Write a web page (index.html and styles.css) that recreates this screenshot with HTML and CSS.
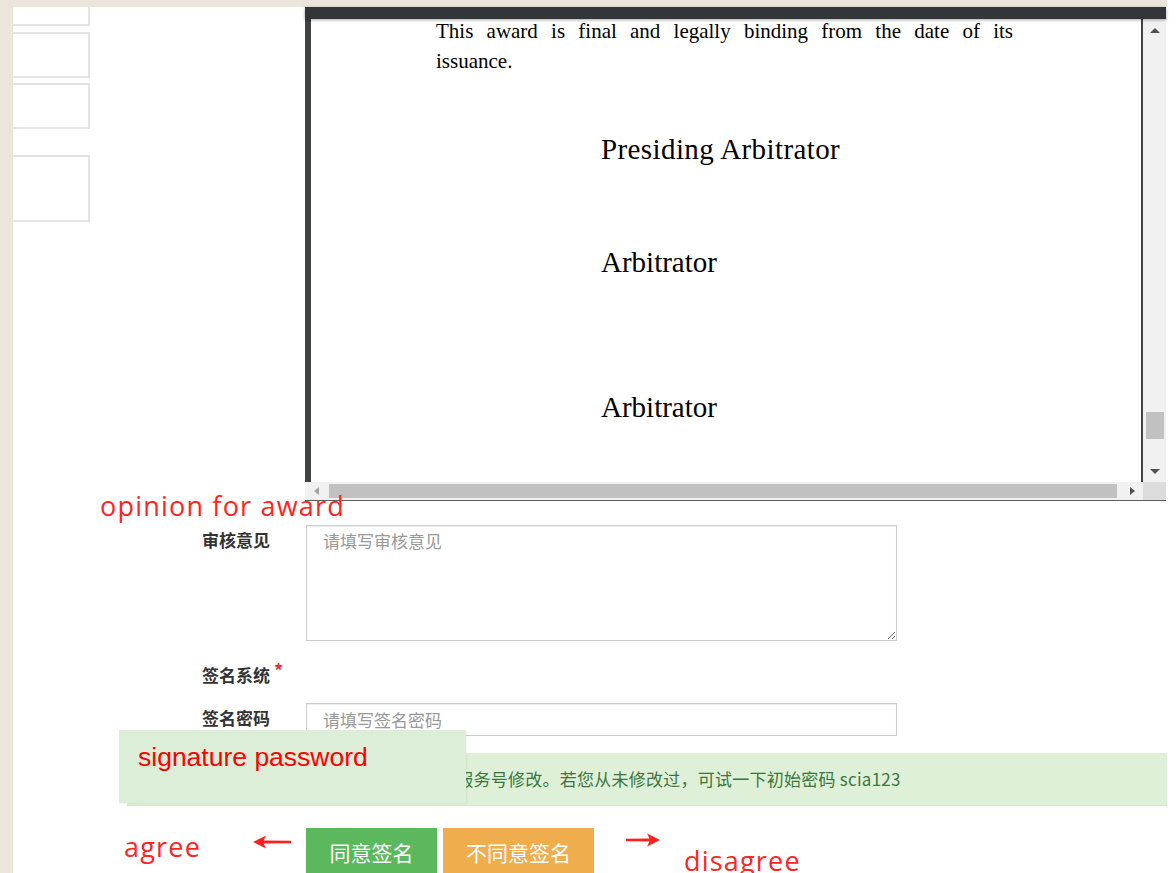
FILE: index.html
```html
<!DOCTYPE html>
<html lang="zh-CN">
<head>
<meta charset="utf-8">
<title>裁决书审核签名</title>
<link rel="stylesheet" href="styles.css">
</head>
<body>
<div class="shell">
  <div class="top">
    <aside class="side">
      <div class="tile tile-a"></div>
      <div class="tile tile-b"></div>
      <div class="tile tile-c"></div>
      <div class="tile tile-d"></div>
    </aside>
    <section class="viewer">
      <div class="viewer-bar"></div>
      <div class="viewer-main">
        <div class="gutter"></div>
        <div class="page">
          <p class="para">This award is final and legally binding from the date of its<br>issuance.</p>
          <p class="sign sign-1">Presiding Arbitrator</p>
          <p class="sign sign-2">Arbitrator</p>
          <p class="sign sign-3">Arbitrator</p>
        </div>
        <div class="gutter gutter-r"></div>
        <div class="vscroll">
          <div class="sb-btn"><svg width="10" height="5" viewBox="0 0 10 5"><path d="M0 5 L5 0 L10 5 Z" fill="#505050"/></svg></div>
          <div class="vtrack"><div class="vthumb"></div></div>
          <div class="sb-btn"><svg width="10" height="5" viewBox="0 0 10 5"><path d="M0 0 L10 0 L5 5 Z" fill="#505050"/></svg></div>
        </div>
      </div>
      <div class="hscroll-row">
        <div class="hscroll">
          <div class="hs-btn"><svg width="5" height="8" viewBox="0 0 5 8"><path d="M5 0 L5 8 L0 4 Z" fill="#a3a3a3"/></svg></div>
          <div class="htrack"><div class="hthumb"></div></div>
          <div class="hs-btn"><svg width="5" height="8" viewBox="0 0 5 8"><path d="M0 0 L5 4 L0 8 Z" fill="#505050"/></svg></div>
        </div>
        <div class="corner"></div>
      </div>
    </section>
  </div>

  <form class="form">
    <div class="row row-opinion">
      <label class="lbl" for="opinion">审核意见</label>
      <textarea id="opinion" class="field area" placeholder="请填写审核意见"></textarea>
    </div>
    <div class="row row-system">
      <span class="lbl">签名系统<sup class="req">*</sup></span>
    </div>
    <div class="row row-pass">
      <label class="lbl" for="signpass">签名密码</label>
      <input id="signpass" class="field inp" type="password" placeholder="请填写签名密码">
    </div>
    <div class="alert">签名密码可通过微信服务号修改。若您从未修改过，可试一下初始密码 scia123</div>
    <div class="actions">
      <button type="button" class="btn btn-ok">同意签名</button>
      <button type="button" class="btn btn-no">不同意签名</button>
    </div>
  </form>
</div>

<div class="note note-opinion">opinion for award</div>
<div class="note-box"><span>signature password</span></div>
<div class="note note-agree">agree</div>
<svg class="arrow arrow-left" width="38" height="14" viewBox="0 0 38 14"><path d="M0 7 L13 0.5 L10.5 5.5 L38 5.7 L38 8.3 L10.5 8.5 L13 13.5 Z" fill="#ff1f1f"/></svg>
<svg class="arrow arrow-right" width="34" height="14" viewBox="0 0 34 14"><path d="M34 7 L21 0.5 L23.5 5.5 L0 5.7 L0 8.3 L23.5 8.5 L21 13.5 Z" fill="#ff1f1f"/></svg>
<div class="note note-disagree">disagree</div>
</body>
</html>
```
FILE: styles.css
```css
* { box-sizing: border-box; }

html, body { margin: 0; padding: 0; }

body {
  position: relative;
  width: 1176px;
  height: 873px;
  overflow: hidden;
  background: #fff;
  color: #333;
  font-family: "Noto Sans CJK SC", "Liberation Sans", sans-serif;
}

/* page frame: beige strips along the top and left edge */
.shell {
  width: 1167px;
  height: 873px;
  border-top: 7px solid #ebe5dc;
  border-left: 13px solid #ebe5dc;
}

.top {
  display: flex;
  height: 494px;
}

/* left column of empty panels */
.side { width: 292px; }

.tile {
  width: 77px;
  border: 2px solid #e4e4e4;
  border-left: 0;
}
.tile-a { height: 19px; border-top: 0; }
.tile-b { height: 46px; margin-top: 6px; }
.tile-c { height: 46px; margin-top: 5px; }
.tile-d { height: 67px; margin-top: 26px; }

/* embedded document viewer */
.viewer {
  width: 861px;
  display: flex;
  flex-direction: column;
  border-bottom: 1px solid #5c5c5c;
}

.viewer-bar {
  position: relative;
  z-index: 1;
  height: 12px;
  background: #323639;
  box-shadow: 0 1px 3px rgba(0, 0, 0, 0.35);
}

.viewer-main {
  display: flex;
  height: 463px;
}

.gutter { width: 6px; background: #404346; }
.gutter-r { width: 2px; }

.page {
  width: 830px;
  overflow: hidden;
  background: #fff;
  color: #000;
  font-family: "Liberation Serif", "Times New Roman", serif;
}

.para {
  width: 577px;
  margin: -3px 0 0 125px;
  font-size: 21px;
  line-height: 30px;
  text-align: justify;
  text-align-last: justify;
}

.sign {
  margin: 0 0 0 290px;
  font-size: 29px;
  line-height: 34px;
}
.sign-1 { margin-top: 56px; letter-spacing: 0.4px; }
.sign-2 { margin-top: 79px; }
.sign-3 { margin-top: 111px; }

/* scrollbars */
.vscroll {
  width: 23px;
  display: flex;
  flex-direction: column;
  background: #f1f1f1;
}

.sb-btn {
  height: 22px;
  display: flex;
  align-items: center;
  justify-content: center;
}
.sb-btn svg { display: block; }

.vtrack { flex: 1; padding: 371px 2px 0 3px; }
.vthumb { height: 27px; background: #c1c1c1; }

.hscroll-row { display: flex; height: 18px; }

.hscroll {
  width: 838px;
  display: flex;
  background: #f1f1f1;
}

.hs-btn {
  width: 22px;
  display: flex;
  align-items: center;
  justify-content: center;
}
.hs-btn svg { display: block; }

.htrack { flex: 1; padding: 2px 0 2px 2px; }
.hthumb { width: 788px; height: 14px; background: #c1c1c1; }

.corner { width: 23px; background: #dcdcdc; }

/* review form */
.row {
  display: grid;
  grid-template-columns: 293px 591px;
}

.lbl {
  padding-left: 189px;
  font-size: 17px;
  font-weight: 700;
  line-height: 24px;
  color: #333;
}

.row-opinion { margin-top: 24px; }
.row-opinion .lbl { padding-top: 3px; }

.row-system { margin-top: 22px; }

.row-pass { margin-top: 16px; }
.row-pass .lbl { padding-top: 3px; }

.req {
  margin-left: 4px;
  color: #ee2b3a;
  font-size: 18px;
  font-weight: 700;
  vertical-align: 4px;
  line-height: 0;
}

.field {
  border: 1px solid #cccccc;
  border-radius: 0;
  box-shadow: inset 0 1px 1px rgba(0, 0, 0, 0.075);
  background: #fff;
  color: #555;
  font-family: "Noto Sans CJK SC", "Liberation Sans", sans-serif;
  font-size: 17px;
  outline: none;
}
.field::placeholder { color: #999; }

.area {
  display: block;
  height: 116px;
  padding: 3px 16px;
  line-height: 24px;
  resize: both;
}

.inp {
  display: block;
  height: 33px;
  padding: 0 16px;
}

.alert {
  width: 1040px;
  margin: 17px 0 0 114px;
  padding: 14px 15px 14px 174px;
  border-bottom: 1px solid #d3e6c8;
  background: #dff0d8;
  color: #3c763d;
  font-size: 17px;
  letter-spacing: 0.25px;
  line-height: 24px;
  white-space: nowrap;
}

.actions {
  display: flex;
  gap: 6px;
  margin: 22px 0 0 293px;
}

.btn {
  height: 48px;
  padding: 0 23px;
  border: 0;
  border-radius: 0;
  color: #fff;
  font-family: "Noto Sans CJK SC", "Liberation Sans", sans-serif;
  font-size: 21px;
  line-height: 48px;
}
.btn-ok { background: #5cb85c; width: 131px; }
.btn-no { background: #f0ad4e; width: 151px; }

/* red call-outs laid over the form */
.note {
  position: absolute;
  color: #ff2424;
  font-family: "Open Sans", "Liberation Sans", sans-serif;
  line-height: 1;
  white-space: nowrap;
}

.note-opinion { left: 100px; top: 492px; font-size: 27px; letter-spacing: 1.2px; }
.note-agree { left: 124px; top: 833px; font-size: 27px; letter-spacing: 1.2px; }
.note-disagree { left: 684px; top: 847px; font-size: 27px; letter-spacing: 1.2px; }

.note-box {
  position: absolute;
  left: 119px;
  top: 730px;
  width: 347px;
  height: 73px;
  padding: 14px 0 0 19px;
  background: #ddeed8;
  box-shadow: 1px 1px 2px rgba(0, 0, 0, 0.06);
}
.note-box span {
  color: #ff0000;
  font-family: "Liberation Sans", Arial, sans-serif;
  font-size: 26.5px;
  line-height: 1;
}

.arrow { position: absolute; display: block; }
.arrow-left { left: 253px; top: 835px; }
.arrow-right { left: 626px; top: 833px; }
```
